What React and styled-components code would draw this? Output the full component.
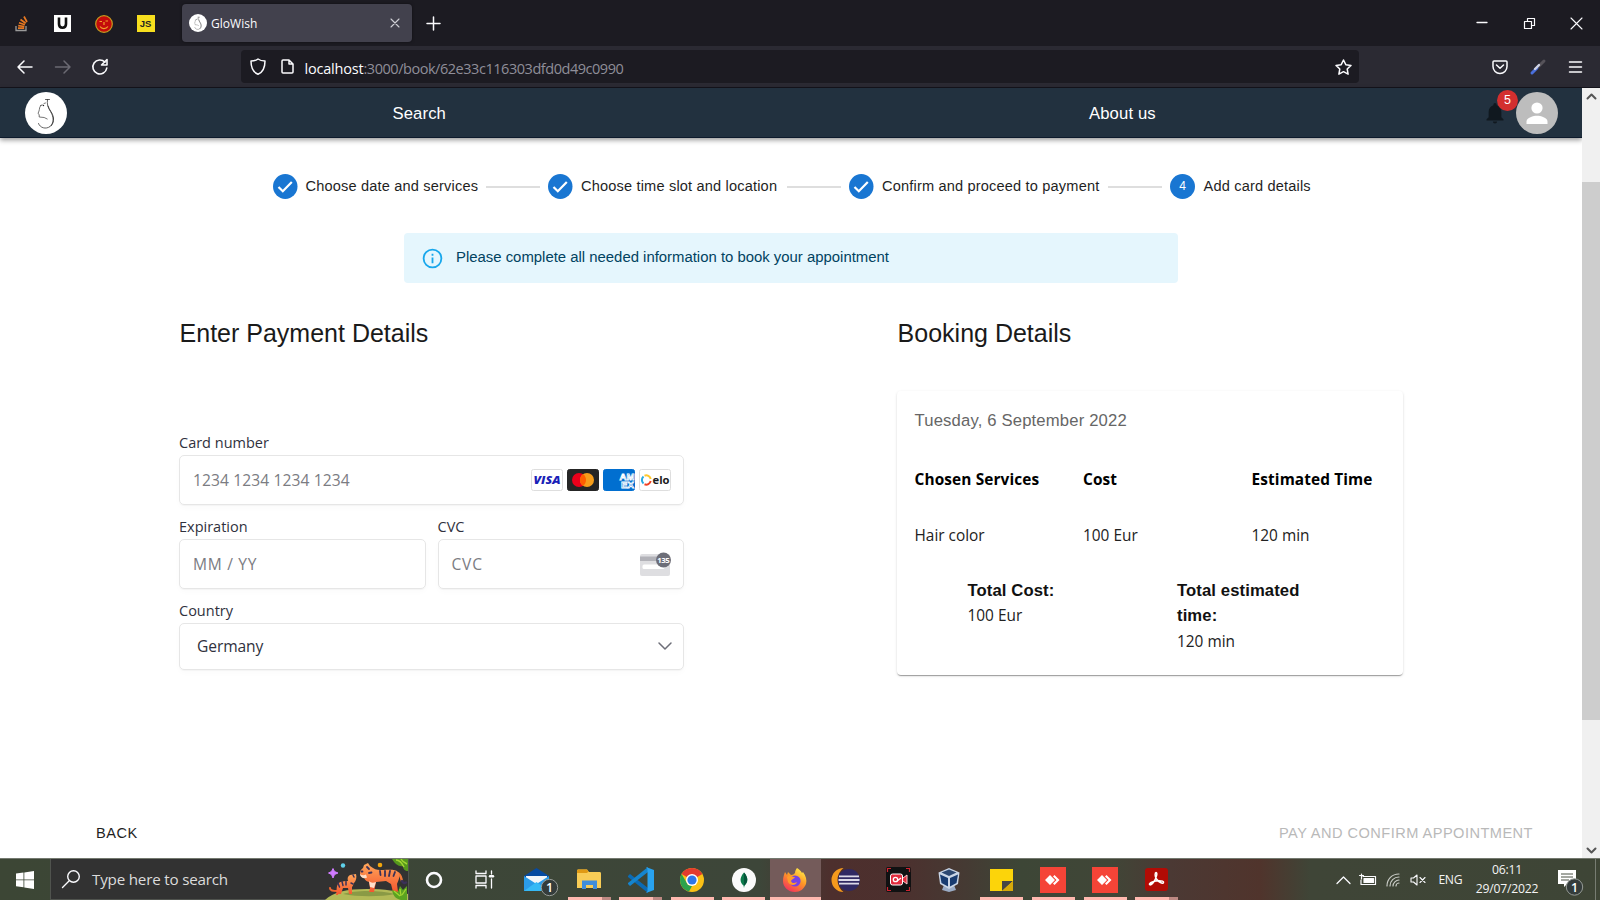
import React from "react";
import styled, { createGlobalStyle } from "styled-components";

const sans = '"Liberation Sans", Arial, sans-serif';
const ui = '"Open Sans", "Noto Sans", sans-serif';

const GlobalStyle = createGlobalStyle`
  * { box-sizing: border-box; }
  body { margin: 0; overflow: hidden; background: #fff; }
  svg { display: block; flex: none; overflow: visible; }
`;

const Screen = styled.div`
  width: 1600px;
  height: 900px;
  display: flex;
  flex-direction: column;
  font-family: ${sans};
  color: #1f1f1f;
  white-space: nowrap;
  overflow: hidden;
`;

/* ---------- browser chrome ---------- */
const TabBar = styled.div`
  height: 46px;
  flex: none;
  display: flex;
  align-items: center;
  background: #1c1b22;
  color: #fbfbfe;
  font-family: ${ui};
`;
const PinnedTabs = styled.div`
  display: flex;
  width: 182px;
  padding: 1px 0 0 12px;
`;
const PinnedTab = styled.div`
  width: 41.5px;
  display: flex;
  padding-left: ${(p) => p.$inset || 0}px;
`;
const Tab = styled.div`
  width: 230px;
  height: 38px;
  padding: 0 13px 0 7px;
  display: flex;
  align-items: center;
  border-radius: 4px;
  background: #42414d;
  box-shadow: 0 0 3px rgba(0, 0, 0, 0.5);
`;
const TabTitle = styled.span`
  flex: 1;
  margin-left: 4px;
  padding-top: 1px;
  font-size: 12px;
  letter-spacing: 0.05px;
`;
const NewTab = styled.div`
  margin-left: 15px;
  flex: 1;
`;
const WindowButtons = styled.div`
  display: flex;
  align-items: center;
  gap: 36px;
  padding-right: 18px;
`;
const Toolbar = styled.div`
  height: 42px;
  flex: none;
  display: flex;
  align-items: center;
  background: #2b2a33;
  border-bottom: 1px solid #15141c;
`;
const NavButtons = styled.div`
  width: 241px;
  padding: 1px 0 0 17px;
  display: flex;
  align-items: center;
  gap: 21.5px;
`;
const UrlBar = styled.div`
  width: 1118px;
  height: 33px;
  padding: 0 7px 0 8.5px;
  display: flex;
  align-items: center;
  border-radius: 4px;
  background: #1c1b22;
`;
const UrlText = styled.span`
  flex: 1;
  margin-left: 11px;
  padding-top: 3px;
  font-family: ${ui};
  font-size: 14.5px;
  letter-spacing: -0.46px;
  color: #8f8e99;
`;
const UrlHost = styled.span`
  color: #fbfbfe;
  letter-spacing: -0.2px;
`;
const PageInfoGap = styled.span`
  width: 15px;
`;
const ToolbarActions = styled.div`
  flex: 1;
  display: flex;
  align-items: center;
  justify-content: flex-end;
  gap: 22.5px;
  padding-right: 18.5px;
`;

/* ---------- page ---------- */
const Viewport = styled.div`
  height: 770px;
  flex: none;
  display: flex;
`;
const Page = styled.div`
  width: 1582px;
  display: flex;
  flex-direction: column;
  background: #fff;
`;
const AppHeader = styled.header`
  height: 50px;
  flex: none;
  display: flex;
  align-items: center;
  padding: 1px 24.5px 0 25px;
  background: #22313f;
  border-bottom: 1px solid #0d1a2c;
  box-shadow: 0 2px 5px rgba(0, 0, 0, 0.42);
  color: #fff;
  font-size: 16.67px;
  letter-spacing: 0.12px;
`;
const HeaderLink = styled.a`
  margin-left: ${(p) => p.$gap}px;
  width: ${(p) => p.$w}px;
  padding-top: 1px;
`;
const Notifications = styled.div`
  position: relative;
  margin-left: auto;
  margin-right: 12px;
`;
const Badge = styled.span`
  position: absolute;
  left: 11.5px;
  top: -12px;
  width: 21px;
  height: 21px;
  border-radius: 50%;
  background: #d32f2f;
  font-size: 12.5px;
  line-height: 21px;
  text-align: center;
`;
const Stepper = styled.div`
  height: 26px;
  margin: 35.5px 0 0 272.5px;
  display: flex;
  align-items: center;
  font-size: 14.58px;
`;
const Step = styled.div`
  display: flex;
  align-items: center;
  gap: 8.5px;
  width: ${(p) => p.$w}px;
`;
const StepLabel = styled.span`
  padding-bottom: 1px;
  letter-spacing: ${(p) => p.$ls || 0}px;
`;
const Connector = styled.div`
  width: 54.5px;
  height: 2px;
  margin-right: 8px;
  background: #dedede;
`;
const InfoAlert = styled.div`
  width: 774px;
  height: 50px;
  margin: 33.5px 0 0 404px;
  padding: 0 18px;
  display: flex;
  align-items: center;
  gap: 13px;
  border-radius: 4px;
  background: #e5f6fd;
  color: #014361;
  font-size: 14.9px;
`;
const AlertMessage = styled.span`
  padding-bottom: 2px;
`;
const Columns = styled.main`
  display: flex;
  margin-top: 34px;
  padding-left: 179px;
  height: 440px;
`;
const Column = styled.section`
  width: ${(p) => p.$w}px;
  margin-right: ${(p) => p.$gap || 0}px;
`;
const Title = styled.h2`
  margin: 0;
  padding-left: 0.6px;
  font-size: 25px;
  font-weight: 400;
  line-height: 32px;
  color: #1a1a1a;
`;
const Form = styled.form`
  margin-top: 82.5px;
  display: flex;
  flex-direction: column;
  font-family: ${ui};
`;
const FieldRow = styled.div`
  display: flex;
  gap: 12px;
`;
const Field = styled.label`
  display: flex;
  flex-direction: column;
  flex: 1;
`;
const FieldLabel = styled.span`
  height: 23px;
  line-height: 22px;
  font-size: 14.5px;
  color: #30313d;
`;
const FieldBox = styled.span`
  height: ${(p) => p.$h || 50}px;
  margin-bottom: 11px;
  padding: 0 ${(p) => p.$end || 12.5}px 0 13px;
  display: flex;
  align-items: center;
  gap: 3.7px;
  border: 1px solid #e6e6e6;
  border-radius: 5px;
  box-shadow: 0 1px 1px rgba(0, 0, 0, 0.03), 0 3px 6px rgba(0, 0, 0, 0.02);
  font-size: 15.6px;
`;
const Placeholder = styled.span`
  flex: 1;
  color: #7b7c82;
  letter-spacing: ${(p) => p.$ls || 0}px;
`;
const Selected = styled.span`
  flex: 1;
  padding-left: 4px;
  letter-spacing: -0.1px;
  color: #30313d;
`;
const BookingCard = styled.div`
  width: 506px;
  height: 284px;
  margin-top: 42px;
  padding: 18px 17.5px;
  border-radius: 4px;
  box-shadow: 0 2px 1px -1px rgba(0, 0, 0, 0.22), 0 1px 1px rgba(0, 0, 0, 0.14), 0 1px 3px rgba(0, 0, 0, 0.12);
  font-family: ${ui};
  font-size: 15.4px;
  color: #222;
`;
const BookingDate = styled.div`
  height: 24px;
  line-height: 24px;
  font-family: ${sans};
  font-size: 16.67px;
  letter-spacing: 0.16px;
  color: #666;
`;
const ServiceTable = styled.div`
  margin-top: 34px;
  display: grid;
  grid-template-columns: 168.5px 168.5px 1fr;
  row-gap: 31px;
  line-height: 25px;
`;
const ColumnHead = styled.b`
  color: #000;
  font-weight: 700;
  font-size: 15.4px;
  letter-spacing: 0.12px;
`;
const Totals = styled.div`
  display: flex;
  margin-top: 30px;
  padding-left: 53px;
  line-height: 25.3px;
`;
const Total = styled.div`
  width: ${(p) => p.$w}px;
  white-space: normal;
`;
const TotalLabel = styled.b`
  display: block;
  font-family: ${sans};
  font-size: 16.67px;
  letter-spacing: 0.1px;
  color: #111;
`;
const Actions = styled.footer`
  margin-top: 63.5px;
  padding: 0 49px 0 96px;
  display: flex;
  justify-content: space-between;
  font-size: 14.6px;
  line-height: 24px;
  color: #1a1a1a;
`;
const ActionButton = styled.span`
  color: ${(p) => (p.$disabled ? "#b9b9b9" : "#1f1f1f")};
  letter-spacing: 0.46px;
`;
const Scrollbar = styled.div`
  width: 18px;
  display: flex;
  flex-direction: column;
  align-items: center;
  justify-content: space-between;
  padding: 5px 0 4px;
  background: #f0f0f0;
`;
const Thumb = styled.div`
  width: 18px;
  height: 538px;
  margin-bottom: 45px;
  background: #cdcdcd;
`;

/* ---------- taskbar ---------- */
const Taskbar = styled.div`
  height: 42px;
  flex: none;
  display: flex;
  border-top: 1px solid #74796f;
  background: linear-gradient(90deg, #3c4635 0, #3d4639 760px, #4d2f2d 830px, #4c302e 900px, #453a33 965px, #3d4636 1020px, #404637 1110px, #4b3934 1170px, #50342c 1260px, #3f4537 1310px, #3e4536 1600px);
  color: #f4f4f4;
  font-family: ${ui};
`;
const StartButton = styled.div`
  width: 50px;
  display: flex;
  align-items: center;
  padding-left: 16px;
`;
const SearchBox = styled.div`
  width: 358.5px;
  display: flex;
  align-items: center;
  padding-left: 11px;
  background: #323232;
  border: 1px solid #50534e;
  border-top: 0;
`;
const SearchHint = styled.span`
  flex: 1;
  margin-left: 12px;
  font-size: 15.2px;
  letter-spacing: -0.2px;
  color: #dcdcdc;
`;
const Apps = styled.div`
  display: flex;
  flex: 1;
`;
const AppSlot = styled.div`
  width: 51.6px;
  display: flex;
  flex-direction: column;
  align-items: center;
  justify-content: flex-end;
  background: ${(p) => (p.$active ? "#745b5a" : "transparent")};
`;
const AppIcon = styled.div`
  flex: 1;
  display: flex;
  align-items: center;
  padding-top: ${(p) => (p.$running ? 3 : 0)}px;
`;
const RunningBar = styled.div`
  width: ${(p) => (p.$active ? 51 : 43)}px;
  height: 3px;
  background: ${(p) => (p.$stacked ? "linear-gradient(90deg, #ffb9b0 34px, #bd8983 34px)" : "#ffb9b0")};
`;
const Tray = styled.div`
  width: 263.5px;
  display: flex;
  align-items: center;
  font-size: 12.2px;
`;
const TrayIcons = styled.div`
  width: 102px;
  display: flex;
  align-items: center;
  gap: 9px;
`;
const Language = styled.span`
  width: 37px;
  letter-spacing: -0.4px;
`;
const Clock = styled.div`
  width: 63px;
  margin-top: -1px;
  line-height: 19px;
  text-align: center;
  letter-spacing: -0.2px;
`;
const Notices = styled.div`
  margin-left: 19px;
  width: 38px;
  height: 100%;
  padding-top: 11px;
  border-right: 1px solid #777c72;
`;

/* ---------- icons ---------- */
const Line = ({ w = 16, h = w, box, sw = 1.5, color = "#fbfbfe", children }) => (
  <svg width={w} height={h} viewBox={box || `0 0 ${w} ${h}`} fill="none" stroke={color} strokeWidth={sw} strokeLinecap="round" strokeLinejoin="round">
    {children}
  </svg>
);

const Logo = ({ size }) => (
  <svg width={size} height={size} viewBox="0 0 42 42" fill="none" stroke="#3b3b3b" strokeLinecap="round">
    <circle cx="21" cy="21" r="21" fill="#fff" stroke="none" />
    <path d="M20.500 7.500h4M22.500 7.500c-.8 5 .5 8 3 12 3.500 5.500 3.500 11.500-.5 15-4 3-10 1.500-11.500-3" strokeWidth=".8" />
    <path d="M23 14c1 4 5 7 5.500 12 .3 4-.8 6-2.500 8" strokeWidth=".9" />
    <path d="M16 13.500c-2 1-1.200 3.500-2 5.500l-1 2.500 1.200 1v2.500l5 .5 3 1.500M15.500 13.500l2-.5M19 11.500l1.500-.5" strokeWidth=".7" />
    <circle cx="18.500" cy="13.500" r=".7" fill="#222" stroke="none" />
  </svg>
);

const StackIcon = () => (
  <svg width="14" height="17" viewBox="0 0 14 17" fill="none" strokeWidth="1.7">
    <path d="M1 11v4.500h10V11" stroke="#9a9a9a" strokeWidth="1.3" />
    <path d="M3 13.200h6.200M3.200 10.700l6.200.8M4 7.800l5.900 2M5.500 4.500l5.200 3.800M9 1.500l3 5.500" stroke="#e87922" />
  </svg>
);
const UIcon = () => (
  <svg width="17" height="17" viewBox="0 0 17 17">
    <path d="M0 0h17v17H0z" fill="#fff" />
    <path d="M5 2.500V9c0 2.500 1.200 3.700 3.500 3.700S12 11.500 12 9V2.500" fill="none" stroke="#111" strokeWidth="2.600" />
  </svg>
);
const FaceIcon = () => (
  <svg width="18" height="18" viewBox="0 0 18 18">
    <circle cx="9" cy="9" r="8.300" fill="#c40b0b" stroke="#c79a1f" strokeWidth="1.200" />
    <path d="M4.500 6.500h2.500M10.500 6H13M9 7v3M5 11.500c2 3 6 2.500 8 0" fill="none" stroke="#f0a12a" strokeWidth="1.200" />
  </svg>
);
const JsBox = styled.div`
  width: 18px;
  height: 17px;
  background: #f7df1e;
  color: #222;
  font: 700 9.5px/18px ${sans};
  text-align: center;
`;
const Check = () => (
  <svg width="24.500" height="25" viewBox="0 0 24.500 25" fill="none">
    <ellipse cx="12.250" cy="12.500" rx="12.250" ry="12.500" fill="#1976d2" />
    <path d="m5.500 13 4.300 4.300 9-9.300" stroke="#fff" strokeWidth="2.200" />
  </svg>
);
const StepNumber = styled.span`
  width: 25px;
  height: 25px;
  flex: none;
  border-radius: 50%;
  background: #1976d2;
  color: #fff;
  font-size: 12px;
  line-height: 25px;
  text-align: center;
`;
const InfoIcon = () => (
  <svg width="21" height="21" viewBox="1 1 22 22" fill="none" stroke="#18a7ec" strokeWidth="1.900">
    <circle cx="12" cy="12" r="9.300" />
    <path d="M12 11v6M12 7v2" />
  </svg>
);
const Bell = () => (
  <svg width="18" height="22" viewBox="3.500 2 17 20" fill="#10181f">
    <path d="M12 22a2 2 0 0 0 2-2h-4a2 2 0 0 0 2 2zm6-6v-5c0-3.070-1.640-5.640-4.500-6.320V4a1.500 1.500 0 0 0-3 0v.68C7.630 5.360 6 7.920 6 11v5l-2 2v1h16v-1l-2-2z" />
  </svg>
);
const Avatar = () => (
  <svg width="42" height="42" viewBox="0 0 42 42">
    <circle cx="21" cy="21" r="21" fill="#bdbdbd" />
    <circle cx="21" cy="16" r="5.600" fill="#fff" />
    <path d="M10.500 32v-2.500c0-3.800 7-5.700 10.500-5.700s10.500 1.900 10.500 5.700V32z" fill="#fff" />
  </svg>
);
const CardFace = ({ fill = "#fff", border = "#dedede", children }) => (
  <svg width="32" height="22" viewBox="0 0 32 22">
    <rect x=".5" y=".5" width="31" height="21" rx="2" fill={fill} stroke={border} />
    {children}
  </svg>
);
const Visa = () => (
  <CardFace>
    <text x="2.500" y="15" fontFamily="Open Sans" fontWeight="800" fontStyle="italic" fontSize="11" textLength="27" lengthAdjust="spacingAndGlyphs" fill="#1a1fb8">VISA</text>
  </CardFace>
);
const Mastercard = () => (
  <CardFace fill="#252525" border="#252525">
    <circle cx="12" cy="11" r="7" fill="#eb001b" />
    <circle cx="20" cy="11" r="7" fill="#f79e1b" />
    <path d="M16 5.260a7 7 0 0 1 0 11.480 7 7 0 0 1 0-11.480z" fill="#ff5f00" />
  </CardFace>
);
const Amex = () => (
  <CardFace fill="#016fd0" border="#016fd0">
    <g fill="#016fd0" stroke="#fff" strokeWidth=".8" fontFamily="Liberation Sans" fontWeight="700" fontSize="9.500">
      <text x="16.500" y="10.500" textLength="15" lengthAdjust="spacingAndGlyphs">AM</text>
      <text x="18" y="18.500" textLength="13" lengthAdjust="spacingAndGlyphs">EX</text>
    </g>
  </CardFace>
);
const Elo = () => (
  <CardFace>
    <g fill="none" strokeWidth="2">
      <path d="M4.500 14.500a4.600 4.600 0 0 1 0-7" stroke="#27a9e0" />
      <path d="M5.500 6.700a4.600 4.600 0 0 1 6.200 3.300" stroke="#ffc72c" />
      <path d="M11.700 12a4.600 4.600 0 0 1-6.200 3.300" stroke="#ef4123" />
    </g>
    <text x="13.500" y="14.500" fontFamily="Open Sans" fontWeight="700" fontSize="10" textLength="17" lengthAdjust="spacingAndGlyphs" fill="#1c1c1c">elo</text>
  </CardFace>
);
const CvcIcon = () => (
  <svg width="31" height="24" viewBox="0 0 31 24">
    <rect y="2" width="30" height="22" rx="2" fill="#dedee1" />
    <path d="M0 4.500h30V9H0z" fill="#b2b2b8" />
    <rect x="2.500" y="12.500" width="22" height="4.500" rx="1.500" fill="#fff" />
    <circle cx="23.500" cy="8" r="7.500" fill="#6d6e78" />
    <text x="23.500" y="11" textAnchor="middle" fontFamily="Open Sans" fontWeight="700" fontSize="7.800" textLength="12.500" fill="#fff">135</text>
  </svg>
);
const WindowsIcon = () => (
  <svg width="18" height="18" viewBox="0 0 18 18" fill="#fff">
    <path d="M0 2.600 7.500 1.500v7H0zM8.300 1.400 18 0v8.500H8.300zM0 9.300h7.500v7L0 15.300zM8.300 9.300H18V18l-9.700-1.400z" />
  </svg>
);
const Tigers = () => (
  <svg width="83" height="41" viewBox="0 0 83 41">
    <defs>
      <linearGradient id="fur" x1="0" y1="0" x2="0" y2="1">
        <stop offset="0" stopColor="#ffa75a" />
        <stop offset="1" stopColor="#f4562f" />
      </linearGradient>
    </defs>
    <path d="M0 41c8-8 22-11 42-11 17 0 32 2 41 5v6z" fill="#b3ba58" />
    <path d="M18 35c12-4 37-4 52 0-14 3-38 3-52 0z" fill="#8a9a45" />
    <path d="M8 9.500l1.500 3 3.500 1.500-3.500 1.500-1.500 3.500-1.500-3.500-3-1.500 3-1.500z" fill="#d07bff" stroke="#d07bff" />
    <circle cx="18" cy="6.500" r="2.200" fill="#5fd0ea" />
    <circle cx="55" cy="6" r="2.300" fill="#f3a60c" />
    <path d="M67 0h16v12c-3 0-5-2-5-5-4 1-8-2-11-7z" fill="#55971d" />
    <path d="M71 1c4 0 6 3 8 7M76 0c1 2 4 4 6 5" stroke="#a2d531" strokeWidth="1.500" fill="none" />
    <path d="M12 32c-4 0-7 0-7-3" fill="none" stroke="#ef6630" strokeWidth="2" strokeLinecap="round" />
    <path d="M11 36c1-4 0-8 2-11 2-3 7-3 10-3-1-3 0-5 2-6l6-1c1 3 0 7-2 9-1 2-1 3-2 4v7h-3l-1-6h-5l-2 6h-3l1-4-1 5z" fill="url(#fur)" />
    <path d="m13 24 1.500 4M17 22.500l1 4M21 22.500v3.500M26 24l2 1M28 16l1 2" stroke="#3b3158" strokeWidth="1.500" strokeLinecap="round" />
    <path d="M72 14c4 1 4 5 5 8" fill="none" stroke="#f0793a" strokeWidth="2.500" />
    <path d="M77 22c1 2 2 2.500 4 1.500" fill="none" stroke="#3b3158" strokeWidth="2.500" strokeLinecap="round" />
    <path d="M35 14c0-3 2-4 3-5l1-3 4-2 2 3 3 2c3 2 6 2 10 2 6 0 12-1 15 2 3 4 0 9-1 12l1 8h-5l-2-8-5-3-10 1-2 10h-5l1-4-1-6c-4-1-5-4-5-6-3 1-4-1-4-3z" fill="url(#fur)" />
    <path d="M35 15c2 1.500 4 1.500 6 .5l1 3c-3 2-7 0-7-3.500zM44 22c2 2 4 2 7 1l-2 6-4-1z" fill="#ffe0cc" />
    <path d="m55 12 .5 4M60 12v5M65 12l-1 5M70 13l-1.500 4M42 8l2 2M44 14l2.500-.5M36.500 12.500h1" stroke="#3b3158" strokeWidth="1.800" strokeLinecap="round" />
    <path d="M67 31l6 2 2-6 3 4 4-4v14H76c-5-1-8-4-9-10z" fill="#5ba321" />
    <path d="M69 32l6 5M75 30l1 7M81 30l-4 6" stroke="#a2d531" strokeWidth="1.300" />
  </svg>
);
const Cortana = () => <Line w={18} sw={2.6}><circle cx="9" cy="9" r="7" /></Line>;
const TaskView = () => (
  <Line w={22} h={17} sw={1.3}>
    <path d="M1 0v2.500h10V0M1 5h10v7H1zM1 17v-2.500h10V17M16.500 0v3M16.500 8v9" />
    <path d="M15 5.300h3" strokeWidth="2.400" />
  </Line>
);
const Counter = ({ x, y }) => (
  <g>
    <circle cx={x} cy={y} r="8.200" fill="#343c3b" stroke="#969b96" />
    <text x={x} y={y + 4.5} textAnchor="middle" fontFamily="Open Sans" fontSize="12.500" fontWeight="600" fill="#fff">1</text>
  </g>
);
const Mail = () => (
  <svg width="26" height="24" viewBox="0 0 26 24">
    <path d="M0 8 12.500 0 25 8v4H0z" fill="#064aa0" />
    <path d="M2 8h21v9H2z" fill="#f3f5f8" />
    <path d="m0 8 12.500 8L25 8v15H0z" fill="#2b9be8" />
    <path d="M0 23 12.500 14 25 23z" fill="#36b9f5" />
    <Counter x={25.5} y={19.5} />
  </svg>
);
const Explorer = () => (
  <svg width="24" height="21" viewBox="0 0 24 21">
    <path d="M0 2c0-1 .5-1.500 1.500-1.500H10L12 3h10.500c1 0 1.500.5 1.500 1.500V19H0z" fill="#f8cc56" />
    <path d="M0 2c0-1 .5-1.500 1.500-1.500H10l1.500 2L10 4H0z" fill="#e09a14" />
    <path d="M5 20v-8.500h15V20h-4v-4H9v4z" fill="#3f8ddb" />
  </svg>
);
const VsCode = () => (
  <svg width="26" height="26" viewBox="0 0 26 26">
    <path d="m0 9 2-2 18 14v5L0 10z" fill="#0b6bb5" />
    <path d="m0 17 2 2L20 5V0L0 16z" fill="#1585cf" />
    <path d="M18 0l8 3v20l-8 3 1.500-2V2z" fill="#29a3f0" />
  </svg>
);
const Chrome = () => (
  <svg width="24" height="24" viewBox="0 0 24 24">
    <circle cx="12" cy="12" r="12" fill="#fbc116" />
    <path d="M12 12 1.600 6A12 12 0 0 1 22.400 6z" fill="#e33b2e" />
    <path d="M1.600 6 8 17l4 1-3 5.600A12 12 0 0 1 1.600 6z" fill="#2ba24c" />
    <circle cx="12" cy="12" r="6" fill="#fff" />
    <circle cx="12" cy="12" r="4.600" fill="#2f76e8" />
  </svg>
);
const Mongo = () => (
  <svg width="24" height="24" viewBox="0 0 24 24">
    <circle cx="12" cy="12" r="12" fill="#fafafa" />
    <path d="M12 4.500c-4.500 5-4.500 9.500-.5 13l.5 2.500.5-2.500c4-3.500 4-8-.5-13z" fill="#0c7a4b" />
    <path d="M12 4.500v13.500c4-4 4.500-8.500 0-13.500z" fill="#06543a" />
  </svg>
);
const Firefox = () => (
  <svg width="24" height="24" viewBox="0 0 24 24">
    <defs>
      <linearGradient id="fox" x1=".8" y1="0" x2=".2" y2="1">
        <stop offset="0" stopColor="#fff14c" />
        <stop offset=".45" stopColor="#ff9725" />
        <stop offset="1" stopColor="#f22b61" />
      </linearGradient>
    </defs>
    <path d="M14 0c2 1 4 3 5 5l1-1c3 4 4 8 3 12-2 5-6 8-11 8C5 24 0 19 0 13c0-4 1-6 2-9l2 3 1-3 3 3c2 0 3-1 4-2 0-2 1-4 2-5z" fill="url(#fox)" />
    <circle cx="12" cy="13" r="5.600" fill="#7542e5" />
    <path d="M4 9c3-3 5 0 8 0-1 2-3 2-4 4 1 3 4 2 6 1-1 4-7 4-9 0z" fill="#ff9b2b" />
  </svg>
);
const Eclipse = () => (
  <svg width="25" height="24" viewBox="0 0 25 24">
    <path d="M8.500 0a12 12 0 0 0 0 24 15 15 0 0 1 0-24z" fill="#f59a1d" />
    <circle cx="14" cy="12" r="11" fill="#302963" />
    <path d="M4 8.400h20M3.500 12h21M4 15.600h20" stroke="#dcdae8" strokeWidth="1.900" />
  </svg>
);
const Recorder = () => (
  <svg width="25" height="25" viewBox="0 0 25 25">
    <rect width="25" height="25" rx="2" fill="#101112" />
    <path d="M1.500 5V1.500H5M20 1.500h3.500V5M1.500 20v3.500H5M20 23.500h3.500V20" fill="none" stroke="#cf2330" strokeWidth="1.200" />
    <rect x="4.500" y="7" width="12" height="11" rx="2" fill="#e02c3e" stroke="#fff" />
    <path d="m17 11 4-3v9l-4-3" fill="#e02c3e" stroke="#ffc6cb" />
    <circle cx="9.500" cy="12.500" r="2.200" fill="none" stroke="#fff" strokeWidth="1.300" />
    <path d="m11 14 4-3" stroke="#fff" strokeWidth="1.300" />
  </svg>
);
const VBox = () => (
  <svg width="25" height="24" viewBox="0 0 25 24">
    <path d="M6 17h10l2 5-7 2-7-2z" fill="#9aabc5" />
    <path d="m11 0 10.500 4.500L20 16l-9 5-9-5L.5 4.500z" fill="#c9d5e6" />
    <path d="m11 1.500 7.500 3L11 8 3.500 4.500z" fill="#2b4771" />
    <path d="M2 6.500 10 10v8.500L3.500 15zM20 6.500 12 10v8.500l6.500-3.500z" fill="#183b70" />
  </svg>
);
const Sticky = () => (
  <svg width="23" height="22" viewBox="0 0 23 22">
    <path d="M0 0h23v22H0z" fill="#fcd40a" />
    <path d="M12 22V12h11z" fill="#454545" />
    <path d="m12 22 11-10v10z" fill="#d6a90a" />
  </svg>
);
const AnyDesk = () => (
  <svg width="26" height="26" viewBox="0 0 26 26">
    <path d="M0 0h26v26H0z" fill="#f54437" />
    <path d="m5 13 5-5 5 5-5 5zM13 9.500 14.500 8l5 5-5 5-1.500-1.500 3.500-3.500z" fill="#fff" />
  </svg>
);
const Acrobat = () => (
  <svg width="23" height="23" viewBox="0 0 23 23">
    <rect width="23" height="23" rx="3" fill="#b20b05" />
    <path d="M11 4.500c2 0 0 6-2 9-2 3-4 4-4.500 3-.6-1.500 5-3.800 9.500-3.800 3 0 5 .6 4.500 2-.7 1.500-5-.7-7-3.700C9.500 8 10 4.500 11 4.500z" fill="none" stroke="#fff" strokeWidth="1.500" />
  </svg>
);
const NoticeIcon = () => (
  <svg width="26" height="26" viewBox="0 0 26 26">
    <path d="M0 0h18v14H9l-3 3v-3H0z" fill="#fff" />
    <path d="M3 4h12M3 7h12M3 10h8" stroke="#4a5144" />
    <Counter x={16.5} y={17} />
  </svg>
);

const apps = [
  { Icon: Cortana },
  { Icon: TaskView },
  { Icon: Mail },
  { Icon: Explorer, running: true, stacked: true },
  { Icon: VsCode, running: true, stacked: true },
  { Icon: Chrome, running: true },
  { Icon: Mongo, running: true },
  { Icon: Firefox, running: true, active: true },
  { Icon: Eclipse },
  { Icon: Recorder },
  { Icon: VBox },
  { Icon: Sticky, running: true },
  { Icon: AnyDesk, running: true },
  { Icon: AnyDesk, running: true },
  { Icon: Acrobat, running: true, stacked: true },
];

const steps = [
  { label: "Choose date and services", w: 213, ls: 0.17 },
  { label: "Choose time slot and location", w: 238.5, ls: 0.17 },
  { label: "Confirm and proceed to payment", w: 258.5, ls: 0.17 },
  { label: "Add card details", w: 150, ls: 0.17 },
];

function BrowserChrome() {
  return (
    <>
      <TabBar>
        <PinnedTabs>
          <PinnedTab $inset={3}><StackIcon /></PinnedTab>
          <PinnedTab $inset={0.5}><UIcon /></PinnedTab>
          <PinnedTab><FaceIcon /></PinnedTab>
          <PinnedTab><JsBox>JS</JsBox></PinnedTab>
        </PinnedTabs>
        <Tab>
          <Logo size={18} />
          <TabTitle>GloWish</TabTitle>
          <Line w={8} sw={1.1} color="#d0d0d6"><path d="m0 0 8 8M8 0 0 8" /></Line>
        </Tab>
        <NewTab><Line w={13}><path d="M6.500 0v13M0 6.500h13" /></Line></NewTab>
        <WindowButtons>
          <Line w={11} sw={1.3}><path d="M0 4.500h10" /></Line>
          <Line w={11} sw={1.2}><path d="M.5 3.500h7v7h-7zM3.500 3V.5h7v7H8" /></Line>
          <Line w={11} sw={1.1}><path d="m0 0 11 11M11 0 0 11" /></Line>
        </WindowButtons>
      </TabBar>
      <Toolbar>
        <NavButtons>
          <Line w={16} h={14}><path d="M15 7H1m6-6L1 7l6 6" /></Line>
          <Line w={16} h={14} color="#6b6a73"><path d="M.5 7H15M9 1l6 6-6 6" /></Line>
          <Line w={16} h={16} sw={1.6}><path d="M14.800 9A7 7 0 1 1 13 3.200M15 .5V6H9.500z" /></Line>
        </NavButtons>
        <UrlBar>
          <Line w={16} h={17}><path d="M8 1c2 1.500 4.500 2 7 2 0 6-1.500 11-7 13.300C2.500 14 1 9 1 3c2.500 0 5-.5 7-2z" /></Line>
          <PageInfoGap />
          <Line w={13} h={15}><path d="M1 2a1 1 0 0 1 1-1h6l4 4v8a1 1 0 0 1-1 1H2a1 1 0 0 1-1-1zM8 1v4h4" /></Line>
          <UrlText><UrlHost>localhost</UrlHost>:3000/book/62e33c116303dfd0d49c0990</UrlText>
          <Line w={17} h={16}><path d="m8.500 1 2.300 4.700 5.200.7-3.800 3.600.9 5.200-4.600-2.500-4.600 2.500.9-5.200L1 6.400l5.200-.7z" /></Line>
        </UrlBar>
        <ToolbarActions>
          <Line w={16} h={14}><path d="M2 1h12a1 1 0 0 1 1 1v4.500a7 7 0 0 1-14 0V2a1 1 0 0 1 1-1zM4.500 5 8 8.300 11.500 5" /></Line>
          <Line w={16} h={16} sw={3}>
            <path d="m9 7 5-5" stroke="#555259" />
            <path d="m2 14 5-5" stroke="#4a6fdc" />
            <path d="m5 10 4-4" stroke="#cfd3e5" strokeWidth="2.400" />
          </Line>
          <Line w={13} h={12}><path d="M.5 1h12M.5 6h12M.5 11h12" /></Line>
        </ToolbarActions>
      </Toolbar>
    </>
  );
}

function PaymentForm() {
  return (
    <Form>
      <Field>
        <FieldLabel>Card number</FieldLabel>
        <FieldBox>
          <Placeholder $ls={0.1}>1234 1234 1234 1234</Placeholder>
          <Visa /><Mastercard /><Amex /><Elo />
        </FieldBox>
      </Field>
      <FieldRow>
        <Field>
          <FieldLabel>Expiration</FieldLabel>
          <FieldBox><Placeholder $ls={0.7}>MM / YY</Placeholder></FieldBox>
        </Field>
        <Field>
          <FieldLabel>CVC</FieldLabel>
          <FieldBox $end={12}><Placeholder $ls={0.8}>CVC</Placeholder><CvcIcon /></FieldBox>
        </Field>
      </FieldRow>
      <Field>
        <FieldLabel>Country</FieldLabel>
        <FieldBox $h={47}>
          <Selected>Germany</Selected>
          <Line w={12} h={8} color="#6d6e78"><path d="m0 1 6 6 6-6" /></Line>
        </FieldBox>
      </Field>
    </Form>
  );
}

function Booking() {
  return (
    <BookingCard>
      <BookingDate>Tuesday, 6 September 2022</BookingDate>
      <ServiceTable>
        <ColumnHead>Chosen Services</ColumnHead>
        <ColumnHead>Cost</ColumnHead>
        <ColumnHead>Estimated Time</ColumnHead>
        <span>Hair color</span>
        <span>100 Eur</span>
        <span>120 min</span>
      </ServiceTable>
      <Totals>
        <Total $w={209.5}><TotalLabel>Total Cost:</TotalLabel>100 Eur</Total>
        <Total $w={150}><TotalLabel>Total estimated time:</TotalLabel>120 min</Total>
      </Totals>
    </BookingCard>
  );
}

export default function App() {
  return (
    <Screen>
      <GlobalStyle />
      <BrowserChrome />
      <Viewport>
        <Page>
          <AppHeader>
            <Logo size={42} />
            <HeaderLink $gap={325.5} $w={60}>Search</HeaderLink>
            <HeaderLink $gap={636.5} $w={80}>About us</HeaderLink>
            <Notifications><Bell /><Badge>5</Badge></Notifications>
            <Avatar />
          </AppHeader>
          <Stepper>
            {steps.map((s, i) => (
              <React.Fragment key={s.label}>
                <Step $w={s.w}>
                  {i < 3 ? <Check /> : <StepNumber>4</StepNumber>}
                  <StepLabel $ls={s.ls}>{s.label}</StepLabel>
                </Step>
                {i < 3 && <Connector />}
              </React.Fragment>
            ))}
          </Stepper>
          <InfoAlert>
            <InfoIcon />
            <AlertMessage>Please complete all needed information to book your appointment</AlertMessage>
          </InfoAlert>
          <Columns>
            <Column $w={505} $gap={213}>
              <Title>Enter Payment Details</Title>
              <PaymentForm />
            </Column>
            <Column $w={507}>
              <Title>Booking Details</Title>
              <Booking />
            </Column>
          </Columns>
          <Actions>
            <ActionButton>BACK</ActionButton>
            <ActionButton $disabled>PAY AND CONFIRM APPOINTMENT</ActionButton>
          </Actions>
        </Page>
        <Scrollbar>
          <Line w={9} h={6} color="#555" sw={2}><path d="m.5 5.500 4-4 4 4" /></Line>
          <Thumb />
          <Line w={9} h={6} color="#555" sw={2}><path d="m.5.500 4 4 4-4" /></Line>
        </Scrollbar>
      </Viewport>
      <Taskbar>
        <StartButton><WindowsIcon /></StartButton>
        <SearchBox>
          <Line w={18} sw={1.4}><circle cx="11.500" cy="6.500" r="5.800" /><path d="M7 11 .5 17.500" /></Line>
          <SearchHint>Type here to search</SearchHint>
          <Tigers />
        </SearchBox>
        <Apps>
          {apps.map(({ Icon, running, active, stacked }, i) => (
            <AppSlot key={i} $active={active}>
              <AppIcon $running={running}><Icon /></AppIcon>
              {running ? <RunningBar $active={active} $stacked={stacked} /> : null}
            </AppSlot>
          ))}
        </Apps>
        <Tray>
          <TrayIcons>
            <Line w={13} h={8} sw={1.3}><path d="m0 7.500 6.500-6.500 6.500 6.500" /></Line>
            <Line w={18} h={12} sw={1.2}><path d="M4 2.500h12.500v8H2V6" /><path d="M5 4.500h9.500v4H5z" fill="#fff" /><path d="M.5 1.500h4M2.500 0v5" /></Line>
            <Line w={15} h={14} sw={1.2} color="#c9ccc6"><path d="M1 13C1 6 6 1 13 1M4 13c0-5 4-9 9-9M7 13c0-3 3-6 6-6M10 13c0-1.500 1.500-3 3-3" /></Line>
            <Line w={16} h={12} sw={1.1}><path d="M1 4h2.500L7 1v10L3.500 8H1zM10 3.500l5 5M15 3.500l-5 5" /></Line>
          </TrayIcons>
          <Language>ENG</Language>
          <Clock>06:11<br />29/07/2022</Clock>
          <Notices><NoticeIcon /></Notices>
        </Tray>
      </Taskbar>
    </Screen>
  );
}
